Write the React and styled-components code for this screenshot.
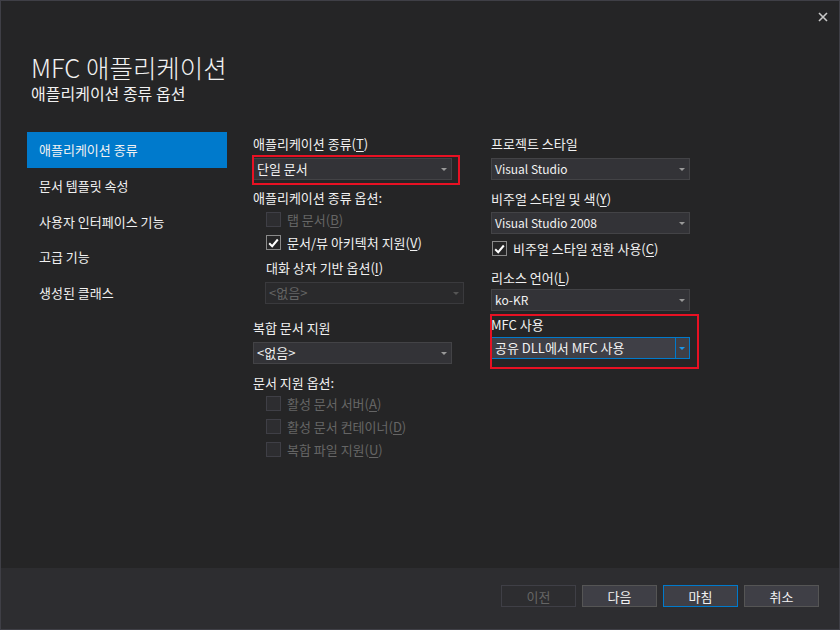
import React from 'react';
import styled, { createGlobalStyle, css } from 'styled-components';

const GlobalStyle = createGlobalStyle`
  html, body {
    margin: 0;
    padding: 0;
    background: #252526;
  }
  * { box-sizing: border-box; }
`;

const Window = styled.div`
  width: 840px;
  height: 630px;
  display: flex;
  flex-direction: column;
  background: #252526;
  border: 1px solid #3f3f46;
  font-family: "Segoe UI", "Noto Sans CJK KR", "Noto Sans", sans-serif;
  font-size: 13px;
  color: #f1f1f1;
  overflow: hidden;
`;

const TitleBar = styled.div`
  height: 33px;
  display: flex;
  justify-content: flex-end;
  align-items: flex-start;
  padding: 11px 11px 0 0;
`;

const CloseButton = styled.div`
  width: 10px;
  height: 10px;
  display: flex;
`;

const Header = styled.div`
  padding: 20px 0 0 30px;
  margin-bottom: 29px;
`;

const Title = styled.h1`
  margin: 0 0 3px;
  font-size: 25.5px;
  font-weight: 300;
  line-height: 26px;
  color: #f1f1f1;
`;

const Subtitle = styled.h2`
  margin: 0;
  font-size: 16px;
  font-weight: 400;
  line-height: 20px;
  color: #f1f1f1;
`;

const Body = styled.div`
  flex: 1;
  display: flex;
  padding-left: 26px;
`;

const Nav = styled.div`
  width: 200px;
  margin-right: 26px;
  display: flex;
  flex-direction: column;
`;

const NavItem = styled.div`
  height: 35.7px;
  display: flex;
  align-items: center;
  padding-left: 12px;
  background: ${p => (p.$active ? '#007acc' : 'transparent')};
  color: #f1f1f1;
`;

const Column = styled.div`
  width: ${p => p.$width}px;
  padding-top: 4px;
  display: flex;
  flex-direction: column;
  align-items: flex-start;
`;

const Label = styled.div`
  height: 16px;
  line-height: 16px;
  white-space: nowrap;
  margin-top: ${p => p.$mt || 0}px;
  margin-left: ${p => p.$indent || 0}px;
  color: ${p => (p.$disabled ? '#656565' : '#f1f1f1')};

  u {
    text-decoration-thickness: 1px;
    text-underline-offset: 2px;
  }
`;

const Highlight = styled.div`
  position: relative;
  margin-top: ${p => p.$mt || 0}px;

  &::after {
    content: '';
    position: absolute;
    top: ${p => p.$inset[0]}px;
    right: ${p => p.$inset[1]}px;
    bottom: ${p => p.$inset[2]}px;
    left: ${p => p.$inset[3]}px;
    border: 2px solid #e81123;
    pointer-events: none;
  }
`;

const Combo = styled.div`
  width: 199px;
  height: 22px;
  display: flex;
  margin-top: ${p => p.$mt || 0}px;
  margin-left: ${p => p.$indent || 0}px;
  background: #333337;
  border: 1px solid #434346;
  color: #f1f1f1;

  ${p => p.$disabled && css`
    background: #2a2a2c;
    border-color: #3a3a3d;
    color: #656565;
  `}

  ${p => p.$focused && css`
    background: #3f3f46;
    border-color: #007acc;
  `}
`;

const ComboText = styled.div`
  flex: 1;
  padding-left: 3px;
  line-height: 20px;
  white-space: nowrap;
  font-size: ${p => (p.$latin ? 12 : 13)}px;
`;

const ComboArrow = styled.div`
  width: 13px;
  display: flex;
  align-items: center;
  justify-content: center;
  margin-right: 1px;
  border-left: 1px solid ${p => (p.$focused ? '#007acc' : 'transparent')};

  &::before {
    content: '';
    border-left: 3px solid transparent;
    border-right: 3px solid transparent;
    border-top: 3px solid ${p => (p.$focused ? '#1c97ea' : p.$disabled ? '#555' : '#999')};
  }
`;

const CheckRow = styled.div`
  display: flex;
  align-items: center;
  gap: 6px;
  height: 15px;
  margin-top: ${p => p.$mt || 0}px;
  margin-left: ${p => p.$indent || 0}px;
  color: ${p => (p.$disabled ? '#656565' : '#f1f1f1')};
  white-space: nowrap;
  line-height: 16px;

  u {
    text-decoration-thickness: 1px;
    text-underline-offset: 2px;
  }
`;

const Box = styled.div`
  width: 15px;
  height: 15px;
  flex-shrink: 0;
  display: flex;
  align-items: center;
  justify-content: center;
  background: ${p => (p.$disabled ? '#2d2d30' : '#252526')};
  border: 1px solid ${p => (p.$disabled ? '#3f3f46' : '#8a8a8a')};
`;

const Footer = styled.div`
  height: 61px;
  background: #2d2d30;
  display: flex;
  justify-content: flex-end;
  align-items: flex-start;
  gap: 6px;
  padding: 17px 20px 0 0;
`;

const Button = styled.div`
  width: 75px;
  height: 22px;
  display: flex;
  align-items: center;
  justify-content: center;
  background: #3f3f46;
  border: 1px solid #555555;
  color: #f1f1f1;

  ${p => p.$disabled && css`
    background: transparent;
    border-color: #3f3f46;
    color: #656565;
  `}

  ${p => p.$default && css`
    border-color: #007acc;
  `}
`;

const Check = () => (
  <svg width="11" height="10" viewBox="0 0 11 10">
    <path d="M1.2 5.2 L4.2 8.2 L9.8 1.5" fill="none" stroke="#ffffff" strokeWidth="2" />
  </svg>
);

const ComboBox = ({ value, disabled, focused, latin, mt, indent }) => (
  <Combo $disabled={disabled} $focused={focused} $mt={mt} $indent={indent}>
    <ComboText $latin={latin}>{value}</ComboText>
    <ComboArrow $focused={focused} $disabled={disabled} />
  </Combo>
);

const CheckBox = ({ children, checked, disabled, mt, indent }) => (
  <CheckRow $disabled={disabled} $mt={mt} $indent={indent}>
    <Box $disabled={disabled}>{checked && <Check />}</Box>
    <span>{children}</span>
  </CheckRow>
);

const navItems = ['애플리케이션 종류', '문서 템플릿 속성', '사용자 인터페이스 기능', '고급 기능', '생성된 클래스'];

const App = () => {
  return (
    <>
      <GlobalStyle />
      <Window>
        <TitleBar>
          <CloseButton>
            <svg width="10" height="10" viewBox="0 0 10 10">
              <path d="M1 1 L9 9 M9 1 L1 9" stroke="#c8c8c8" strokeWidth="1.6" />
            </svg>
          </CloseButton>
        </TitleBar>

        <Header>
          <Title>MFC 애플리케이션</Title>
          <Subtitle>애플리케이션 종류 옵션</Subtitle>
        </Header>

        <Body>
          <Nav>
            {navItems.map((item, i) => (
              <NavItem key={item} $active={i === 0}>{item}</NavItem>
            ))}
          </Nav>

          <Column $width={238}>
            <Label>애플리케이션 종류(<u>T</u>)</Label>
            <Highlight $mt={6} $inset={[-3, -8, -5, -1]}>
              <ComboBox value="단일 문서" />
            </Highlight>
            <Label $mt={10}>애플리케이션 종류 옵션:</Label>
            <CheckBox disabled mt={6} indent={13}>탭 문서(<u>B</u>)</CheckBox>
            <CheckBox checked mt={8} indent={13}>문서/뷰 아키텍처 지원(<u>V</u>)</CheckBox>
            <Label $mt={10} $indent={13}>대화 상자 기반 옵션(<u>I</u>)</Label>
            <ComboBox value="<없음>" disabled mt={6} indent={12} />
            <Label $mt={16}>복합 문서 지원</Label>
            <ComboBox value="<없음>" mt={6} />
            <Label $mt={11}>문서 지원 옵션:</Label>
            <CheckBox disabled mt={5} indent={13}>활성 문서 서버(<u>A</u>)</CheckBox>
            <CheckBox disabled mt={8} indent={13}>활성 문서 컨테이너(<u>D</u>)</CheckBox>
            <CheckBox disabled mt={8} indent={13}>복합 파일 지원(<u>U</u>)</CheckBox>
          </Column>

          <Column $width={220}>
            <Label>프로젝트 스타일</Label>
            <ComboBox value="Visual Studio" latin mt={6} />
            <Label $mt={11}>비주얼 스타일 및 색(<u>Y</u>)</Label>
            <ComboBox value="Visual Studio 2008" latin mt={5} />
            <CheckBox checked mt={7} indent={1}>비주얼 스타일 전환 사용(<u>C</u>)</CheckBox>
            <Label $mt={14}>리소스 언어(<u>L</u>)</Label>
            <ComboBox value="ko-KR" latin mt={3} />
            <Highlight $mt={6} $inset={[-3, -9, -10, -1]}>
              <Label>MFC 사용</Label>
              <ComboBox value="공유 DLL에서 MFC 사용" focused mt={4} />
            </Highlight>
          </Column>
        </Body>

        <Footer>
          <Button $disabled>이전</Button>
          <Button>다음</Button>
          <Button $default>마침</Button>
          <Button>취소</Button>
        </Footer>
      </Window>
    </>
  );
};

export default App;
